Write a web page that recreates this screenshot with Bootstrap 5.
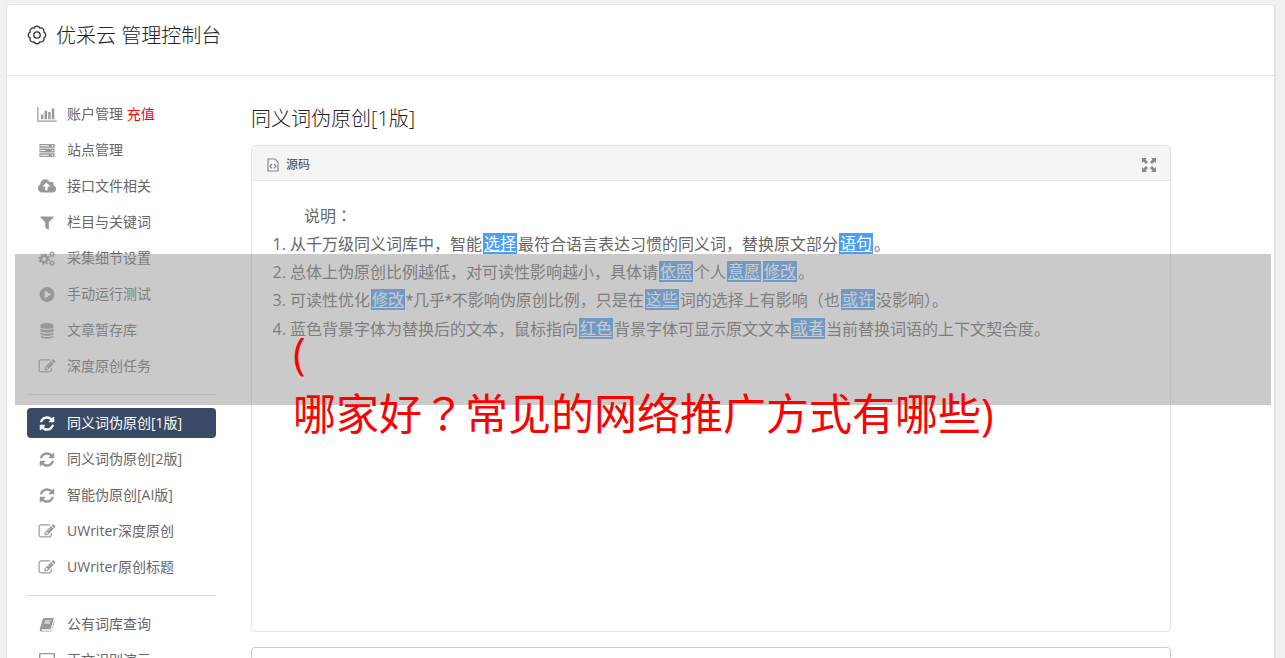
<!DOCTYPE html>
<html lang="zh-CN">
<head>
<meta charset="utf-8">
<meta name="viewport" content="width=device-width, initial-scale=1">
<title>优采云 管理控制台</title>
<link href="https://cdn.jsdelivr.net/npm/bootstrap@5.3.0/dist/css/bootstrap.min.css" rel="stylesheet">
<style>
body{background:#f1f1f1;font-family:"Open Sans","Noto Sans CJK SC",sans-serif;font-size:14px;color:#666;font-weight:400}
.console{margin:4px 9px 0 6px;background:#fff;border:1px solid #e3e3e3;border-right-width:2px;border-radius:4px 4px 0 0}
.console-head{height:71px;padding:16px 20px;gap:9px;border-bottom:1px solid #e3e3e3;color:#333}
h1,h2{font-size:20px;line-height:30px;font-weight:300;color:#222;margin:0}
.console-body{padding:23px 20px 0;gap:35px}
.side{width:189px;flex:none}
.side .nav-link{height:30px;margin-bottom:6px;padding:0 0 0 10px;gap:10px;color:#666;border-radius:4px;line-height:30px;white-space:nowrap}
.side .nav-link svg{width:20px;height:17px;fill:#999;flex:none}
.side .nav-link.active{background:#3a4a66;color:#fff}
.side .nav-link.active svg{fill:#fff}
.side hr{margin:7px 0 13px;border-color:#ddd;opacity:1}
.topup{color:#f00}
.work{margin-right:83px;padding-top:5px;min-width:0}
.source{margin-top:11px;border:1px solid #e5e5e5;border-radius:4px}
.source-head{height:35px;padding:3px 14px 0 15px;background:#f5f5f5;border-bottom:1px solid #e5e5e5;font-size:12px;color:#444}
.source-head .label-row{gap:7px}
.source-text{min-height:450px;padding:20px 20px;font-size:16px;line-height:28px}
.source-text p{margin:0;text-indent:32px}
.source-text ol{margin:0;padding-left:18px}
.swap{display:inline-block;height:21px;line-height:20px;margin:3px 1px 0;padding:0 1px;background:#4a9ff5;color:#fff;text-decoration:underline;text-underline-offset:2px;vertical-align:top}
.star{font-family:Roboto,sans-serif}
.mid{font-family:"Noto Sans CJK TC",sans-serif}
.result{margin-top:15px;min-height:120px;border:1px solid #ccc;border-radius:4px;resize:none}
.shade{top:249px;left:8px;right:3px;height:151px;padding:70px 0 0 278px;background:rgba(150,150,150,.5);color:#f00;font-size:43px;line-height:58px;font-weight:400;white-space:nowrap;pointer-events:none}
</style>
</head>
<body class="vh-100 overflow-hidden">
<svg class="d-none">
<symbol id="refresh" viewBox="0 0 1792 1792"><path d="M1639 1056q0 5-1 7-64 268-268 434.500t-478 166.500q-146 0-282.500-55t-243.500-157l-129 129q-19 19-45 19t-45-19-19-45v-448q0-26 19-45t45-19h448q26 0 45 19t19 45-19 45l-137 137q71 66 161 102t187 36q134 0 250-65t186-179q11-17 53-117 8-23 30-23h192q13 0 22.500 9.500t9.500 22.500zm25-800v448q0 26-19 45t-45 19h-448q-26 0-45-19t-19-45 19-45l138-138q-148-137-349-137-134 0-250 65t-186 179q-11 17-53 117-8 23-30 23h-199q-13 0-22.500-9.500t-9.500-22.500v-7q65-268 270-434.500t480-166.500q146 0 284 55.500t245 156.500l130-129q19-19 45-19t45 19 19 45z"/></symbol>
<symbol id="edit" viewBox="0 0 1792 1792"><path d="M888 1184l116-116-152-152-116 116v56h96v96h56zm440-720q-16-16-33 1l-350 350q-17 17-1 33t33-1l350-350q17-17 1-33zm80 594v190q0 119-84.500 203.500t-203.500 84.500h-832q-119 0-203.500-84.500t-84.500-203.500v-832q0-119 84.500-203.500t203.500-84.500h832q63 0 117 25 15 7 18 23 3 17-9 29l-49 49q-14 14-32 8-23-6-45-6h-832q-66 0-113 47t-47 113v832q0 66 47 113t113 47h832q66 0 113-47t47-113v-126q0-13 9-22l64-64q15-15 35-7t20 29zm-96-738l288 288-672 672h-288v-288zm444 132l-92 92-288-288 92-92q28-28 68-28t68 28l152 152q28 28 28 68t-28 68z"/></symbol>
</svg>
<div class="console position-relative">
  <header class="console-head d-flex align-items-start">
    <svg class="flex-shrink-0" width="20" height="28" viewBox="0 -4 20 28" fill="none" stroke="#333" stroke-width="1.300"><path d="M16.900 7.100a3.200 3.200 0 0 1 0 5.800a3.200 3.200 0 0 1-4 4a3.200 3.200 0 0 1-5.800 0a3.200 3.200 0 0 1-4-4a3.200 3.200 0 0 1 0-5.800a3.200 3.200 0 0 1 4-4a3.200 3.200 0 0 1 5.800 0a3.200 3.200 0 0 1 4 4z"/><circle cx="10" cy="10" r="3.200"/></svg>
    <h1>优采云 管理控制台</h1>
  </header>
  <div class="console-body d-flex">
    <nav class="side nav flex-column flex-nowrap">
      <a class="nav-link d-flex align-items-center" href="#"><svg viewBox="0 0 2048 1792"><path d="M640 896v512h-256v-512h256zm384-384v896h-256v-896h256zm1024 1024v128h-2048v-1536h128v1408h1920zm-640-896v768h-256v-768h256zm384-384v1152h-256v-1152h256z"/></svg><span>账户管理 <span class="topup">充值</span></span></a>
      <a class="nav-link d-flex align-items-center" href="#"><svg viewBox="0 0 20 18"><path fill-rule="evenodd" d="M2 2h16v4H2zM3 3.500v1h9v-1zM15 3.300v1.400h1.500V3.300zM2 7h16v4H2zM3 8.500v1h5v-1zM15 8.300v1.400h1.500V8.300zM2 12h16v4H2zM3 13.500v1h9v-1zM15 13.300v1.400h1.500v-1.400z"/></svg>站点管理</a>
      <a class="nav-link d-flex align-items-center" href="#"><svg viewBox="-64 0 1920 1792"><path d="M1216 864q0-14-9-23l-352-352q-9-9-23-9t-23 9l-351 351q-10 12-10 24 0 14 9 23t23 9h224v352q0 13 9.500 22.500t22.500 9.500h192q13 0 22.500-9.500t9.500-22.500v-352h224q13 0 22.500-9.500t9.500-22.500zm640 288q0 159-112.500 271.500t-271.500 112.500h-1088q-185 0-316.500-131.500t-131.500-316.500q0-130 70-240t188-165q-2-30-2-43 0-212 150-362t362-150q156 0 285.500 87t188.500 231q71-62 166-62 106 0 181 75t75 181q0 76-41 138 130 31 213.500 135.500t83.500 238.500z"/></svg>接口文件相关</a>
      <a class="nav-link d-flex align-items-center" href="#"><svg viewBox="0 0 1792 1792"><path d="M1595 295q17 41-14 70l-493 493v742q0 42-39 59-13 5-25 5-27 0-45-19l-256-256q-19-19-19-45v-486l-493-493q-31-29-14-70 17-39 59-39h1280q42 0 59 39z"/></svg>栏目与关键词</a>
      <a class="nav-link d-flex align-items-center" href="#"><svg viewBox="0 0 20 18"><g fill="none" stroke="#999"><circle cx="7" cy="9.500" r="3.400" stroke-width="2.600"/><circle cx="7" cy="9.500" r="5.200" stroke-width="1.800" stroke-dasharray="2.040"/><circle cx="15.300" cy="4.500" r="1.800" stroke-width="1.300"/><circle cx="15.300" cy="4.500" r="2.800" stroke-width="1" stroke-dasharray="1.250"/><circle cx="15.300" cy="13.800" r="1.800" stroke-width="1.300"/><circle cx="15.300" cy="13.800" r="2.800" stroke-width="1" stroke-dasharray="1.250"/></g></svg>采集细节设置</a>
      <a class="nav-link d-flex align-items-center" href="#"><svg viewBox="100 100 1592 1592"><path d="M896 128q209 0 385.500 103t279.500 279.500 103 385.500-103 385.500-279.500 279.500-385.500 103-385.500-103-279.500-279.500-103-385.500 103-385.500 279.500-279.500 385.500-103zm384 823q32-18 32-55t-32-55l-544-320q-31-19-64-1-32 19-32 56v640q0 37 32 56 16 8 32 8 17 0 32-9z" transform="translate(90 90) scale(.9)"/></svg>手动运行测试</a>
      <a class="nav-link d-flex align-items-center" href="#"><svg viewBox="0 0 20 18"><path d="M3 4c0-4 14-4 14 0v1c0 3-14 3-14 0zM3 7c3 2 11 2 14 0v2c0 3-14 3-14 0zM3 11c3 2 11 2 14 0v1.500c0 3-14 3-14 0zM3 14.500c3 2 11 2 14 0V15c0 3.500-14 3.500-14 0z"/></svg>文章暂存库</a>
      <a class="nav-link d-flex align-items-center" href="#"><svg><use href="#edit"/></svg>深度原创任务</a>
      <hr>
      <a class="nav-link active d-flex align-items-center" href="#" aria-current="page"><svg><use href="#refresh"/></svg>同义词伪原创[1版]</a>
      <a class="nav-link d-flex align-items-center" href="#"><svg><use href="#refresh"/></svg>同义词伪原创[2版]</a>
      <a class="nav-link d-flex align-items-center" href="#"><svg><use href="#refresh"/></svg>智能伪原创[AI版]</a>
      <a class="nav-link d-flex align-items-center" href="#"><svg><use href="#edit"/></svg>UWriter深度原创</a>
      <a class="nav-link d-flex align-items-center" href="#"><svg><use href="#edit"/></svg>UWriter原创标题</a>
      <hr>
      <a class="nav-link d-flex align-items-center" href="#"><svg viewBox="0 0 20 18"><path fill-rule="evenodd" d="M7 2h9q1.500 0 1 1.500L14.200 13q-.3 1-1.500 1H5q-1 0-1 .7t1 .8h8.800q.7 0 1-.8L17.600 5q.6.500.3 1.500L15.200 15q-.5 1.500-1.800 1.500H4.500Q2 16.500 2.300 14L5.200 4Q5.700 2 7 2zM8 4.700 7.700 5.700h6l.3-1zM7.300 7 7 8h6l.3-1z"/></svg>公有词库查询</a>
      <a class="nav-link d-flex align-items-center" href="#"><svg viewBox="0 0 20 18"><path fill-rule="evenodd" d="M2.500 1h15q1 0 1 1v10.500q0 1-1 1h-6V15H14v1.500H6V15h2.500v-1.500h-6q-1 0-1-1V2q0-1 1-1zM3 2.300V10h14V2.300z"/></svg>正文识别演示</a>
    </nav>
    <main class="work flex-grow-1">
      <h2>同义词伪原创[1版]</h2>
      <section class="source">
        <div class="source-head d-flex align-items-center justify-content-between">
          <span class="label-row d-flex align-items-center"><svg width="12" height="14" viewBox="0 0 12 14" fill="none" stroke="#888" stroke-width="1.200"><path d="M1 1h7l3 3v9H1zM5 6 3 8.200l2 2.200M7 6l2 2.200-2 2.200"/></svg>源码</span>
          <button type="button" class="btn p-0 border-0 d-flex" aria-label="全屏"><svg width="14" height="14" viewBox="0 0 14 14" fill="#888"><path d="M0 0h5L3.500 1.500 6 4 4 6 1.500 3.500 0 5zM14 0v5l-1.500-1.500L10 6 8 4l2.500-2.500L9 0zM0 14V9l1.500 1.500L4 8l2 2-2.500 2.500L5 14zM14 14H9l1.500-1.500L8 10l2-2 2.500 2.500L14 9z"/></svg></button>
        </div>
        <div class="source-text">
          <p>说明<span class="mid" lang="zh-TW">：</span></p>
          <ol>
            <li>从千万级同义词库中，智能<span class="swap">选择</span>最符合语言表达习惯的同义词，替换原文部分<span class="swap">语句</span>。</li>
            <li>总体上伪原创比例越低，对可读性影响越小，具体请<span class="swap">依照</span>个人<span class="swap">意愿</span><span class="swap">修改</span>。</li>
            <li>可读性优化<span class="swap">修改</span><span class="star">*</span>几乎<span class="star">*</span>不影响伪原创比例，只是在<span class="swap">这些</span>词的选择上有影响（也<span class="swap">或许</span>没影响）。</li>
            <li>蓝色背景字体为替换后的文本，鼠标指向<span class="swap">红色</span>背景字体可显示原文文本<span class="swap">或者</span>当前替换词语的上下文契合度。</li>
          </ol>
        </div>
      </section>
      <textarea class="result d-block w-100" aria-label="结果"></textarea>
    </main>
  </div>
  <div class="shade position-absolute">(<br>哪家好<span class="mid" lang="zh-TW">？</span>常见的网络推广方式有哪些)</div>
</div>
<script src="https://cdn.jsdelivr.net/npm/bootstrap@5.3.0/dist/js/bootstrap.bundle.min.js"></script>
</body>
</html>
